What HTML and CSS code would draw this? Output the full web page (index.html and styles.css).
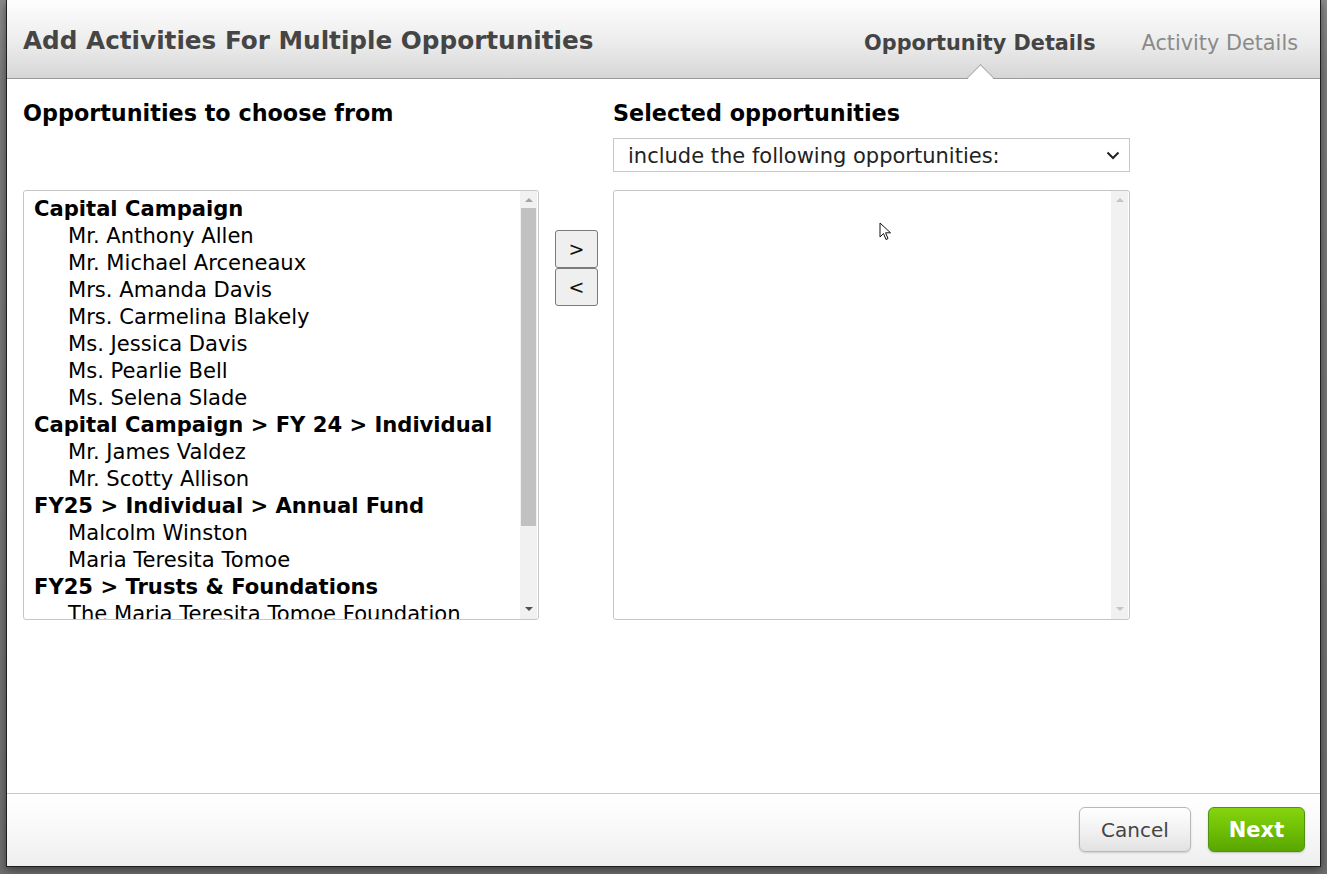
FILE: index.html
```html
<!DOCTYPE html>
<html>
<head>
<meta charset="utf-8">
<link rel="stylesheet" href="styles.css">
</head>
<body>
<div class="backdrop">
  <div class="dialog">
    <div class="dlg-header">
      <h1 class="dlg-title">Add Activities For Multiple Opportunities</h1>
      <div class="tabs">
        <span class="tab active">Opportunity Details</span>
        <span class="tab">Activity Details</span>
      </div>
    </div>
    <div class="dlg-body">
      <h2 class="col-heading left-head">Opportunities to choose from</h2>
      <h2 class="col-heading right-head">Selected opportunities</h2>
      <div class="select">
        <span>include the following opportunities:</span>
        <svg class="chev" width="14" height="9" viewBox="0 0 14 9"><path d="M1.5 1.5 L7 7 L12.5 1.5" fill="none" stroke="#222" stroke-width="2"/></svg>
      </div>
      <div class="listbox left-list">
        <div class="list-items">
          <div class="grp">Capital Campaign</div>
          <div class="opt">Mr. Anthony Allen</div>
          <div class="opt">Mr. Michael Arceneaux</div>
          <div class="opt">Mrs. Amanda Davis</div>
          <div class="opt">Mrs. Carmelina Blakely</div>
          <div class="opt">Ms. Jessica Davis</div>
          <div class="opt">Ms. Pearlie Bell</div>
          <div class="opt">Ms. Selena Slade</div>
          <div class="grp">Capital Campaign &gt; FY 24 &gt; Individual</div>
          <div class="opt">Mr. James Valdez</div>
          <div class="opt">Mr. Scotty Allison</div>
          <div class="grp">FY25 &gt; Individual &gt; Annual Fund</div>
          <div class="opt">Malcolm Winston</div>
          <div class="opt">Maria Teresita Tomoe</div>
          <div class="grp">FY25 &gt; Trusts &amp; Foundations</div>
          <div class="opt">The Maria Teresita Tomoe Foundation</div>
        </div>
        <div class="scrollbar">
          <span class="arr up"></span>
          <div class="track"><div class="thumb"></div></div>
          <span class="arr down"></span>
        </div>
      </div>
      <div class="movers">
        <button class="mv">&gt;</button>
        <button class="mv">&lt;</button>
      </div>
      <div class="listbox right-list">
        <div class="list-items"></div>
        <div class="scrollbar disabled">
          <span class="arr up"></span>
          <div class="track"></div>
          <span class="arr down"></span>
        </div>
        <svg class="cursor" width="14" height="20" viewBox="0 0 14 20"><path d="M1 1 L1 15 L4.5 11.5 L7 17.5 L9 16.6 L6.6 10.8 L11.5 10.8 Z" fill="#fff" stroke="#111" stroke-width="1" stroke-linejoin="round"/></svg>
      </div>
    </div>
    <div class="dlg-footer">
      <button class="btn cancel">Cancel</button>
      <button class="btn next">Next</button>
    </div>
  </div>
</div>
</body>
</html>
```

FILE: styles.css
```css
html, body {
  margin: 0;
  padding: 0;
  height: 100%;
  overflow: hidden;
}
body {
  background: #757575;
  font-family: "DejaVu Sans", Verdana, sans-serif;
}
.backdrop {
  height: 874px;
  padding-left: 6px;
  background: linear-gradient(to bottom, #8a8a8a 0, #7a7a7a 80px, #6e6e6e 100%);
}
.dialog {
  width: 1313px;
  height: 866px;
  background: #fff;
  border: 1px solid #1e1e1e;
  border-top: none;
  display: flex;
  flex-direction: column;
  box-shadow: 0 3px 8px rgba(0,0,0,0.45);
}
.dlg-header {
  height: 78px;
  flex: none;
  border-bottom: 1px solid #9a9a9a;
  background: linear-gradient(to bottom, #fefefe 0%, #ececec 55%, #d6d6d6 100%);
  display: flex;
  align-items: flex-start;
  justify-content: space-between;
  padding: 0 22px 0 16px;
}
.dlg-title {
  margin: 26px 0 0 0;
  font-size: 24.7px;
  font-weight: bold;
  color: #454545;
  line-height: 30px;
}
.tabs {
  display: flex;
  gap: 46px;
  margin-top: 30px;
}
.tab {
  font-size: 20.8px;
  line-height: 27px;
  color: #8a8a8a;
  position: relative;
}
.tab.active {
  font-weight: bold;
  color: #444;
}
.tab.active::after {
  content: "";
  position: absolute;
  left: 50%;
  top: 38px;
  width: 18px;
  height: 18px;
  margin-left: -9px;
  background: #fff;
  border-left: 1px solid #a8a8a8;
  border-top: 1px solid #a8a8a8;
  transform: rotate(45deg);
}
.dlg-body {
  flex: 1;
  display: grid;
  grid-template-columns: 516px 74px 517px;
  grid-template-rows: 24px 34px 430px;
  row-gap: 0;
  padding: 22px 0 0 16px;
  align-content: start;
  position: relative;
}
.col-heading {
  margin: 0;
  font-size: 22.3px;
  font-weight: bold;
  line-height: 24px;
  color: #000;
  white-space: nowrap;
}
.left-head { grid-column: 1; grid-row: 1; }
.right-head { grid-column: 3; grid-row: 1; }
.select {
  grid-column: 3;
  grid-row: 2;
  margin-top: 13px;
  height: 34px;
  box-sizing: border-box;
  border: 1px solid #c8c8c8;
  display: flex;
  align-items: center;
  justify-content: space-between;
  padding: 1px 9px 0 14px;
  font-size: 21px;
  color: #222;
  white-space: nowrap;
}
.chev { display: block; }
.listbox {
  grid-row: 3;
  margin-top: 31px;
  height: 430px;
  box-sizing: border-box;
  border: 1px solid #c6c6c6;
  border-radius: 3px;
  display: flex;
  overflow: hidden;
  background: #fff;
}
.left-list { grid-column: 1; }
.right-list { grid-column: 3; position: relative; }
.list-items {
  flex: 1;
  overflow: hidden;
  padding: 4px 0 0 10px;
  font-size: 21.1px;
  line-height: 27px;
  color: #000;
  white-space: nowrap;
}
.grp { font-weight: bold; }
.opt { padding-left: 34px; }
.scrollbar {
  width: 17px;
  flex: none;
  margin-right: 1px;
  background: #f1f1f1;
  display: flex;
  flex-direction: column;
  align-items: center;
}
.arr {
  width: 0;
  height: 0;
  border-left: 4px solid transparent;
  border-right: 4px solid transparent;
  flex: none;
}
.arr.up {
  border-bottom: 4px solid #a3a3a3;
  margin: 7px 0 6px;
}
.arr.down {
  border-top: 4px solid #505050;
  margin: 6px 0 8px;
}
.track {
  flex: 1;
  width: 100%;
  display: flex;
  flex-direction: column;
}
.thumb {
  height: 318px;
  margin: 0 1px 0 1px;
  background: #c1c1c1;
}
.scrollbar.disabled .arr.up { border-bottom-color: #c4c4c4; }
.scrollbar.disabled .arr.down { border-top-color: #c4c4c4; }
.movers {
  grid-column: 2;
  grid-row: 3;
  margin-top: 71px;
  padding-left: 16px;
  display: flex;
  flex-direction: column;
  align-items: flex-start;
}
.mv {
  width: 43px;
  height: 38px;
  margin: 0;
  padding: 0;
  border: 1px solid #7a7a7a;
  border-radius: 3px;
  background: #efefef;
  font-family: "DejaVu Sans", sans-serif;
  font-size: 19px;
  color: #111;
}
.cursor {
  position: absolute;
  left: 265px;
  top: 31px;
}
.dlg-footer {
  height: 73px;
  flex: none;
  margin-top: auto;
  border-top: 1px solid #c8c8c8;
  background: linear-gradient(to bottom, #ffffff 0%, #fafafa 40%, #eeeeee 100%);
  display: flex;
  justify-content: flex-end;
  align-items: flex-start;
  gap: 17px;
  padding: 13px 15px 0 0;
  box-sizing: border-box;
}
.btn {
  height: 45px;
  border-radius: 6px;
  font-family: "DejaVu Sans", sans-serif;
  font-size: 20px;
  margin: 0;
  cursor: pointer;
}
.cancel {
  width: 112px;
  color: #444;
  background: linear-gradient(to bottom, #ffffff 0%, #f2f2f2 50%, #e2e2e2 100%);
  border: 1px solid #b8b8b8;
  box-shadow: 0 1px 2px rgba(0,0,0,0.15);
}
.next {
  width: 97px;
  color: #fff;
  font-weight: bold;
  font-size: 21px;
  background: linear-gradient(to bottom, #86d40e 0%, #6fbf05 50%, #58a600 100%);
  border: 1px solid #4f9214;
  box-shadow: 0 1px 2px rgba(0,0,0,0.2);
}
```
